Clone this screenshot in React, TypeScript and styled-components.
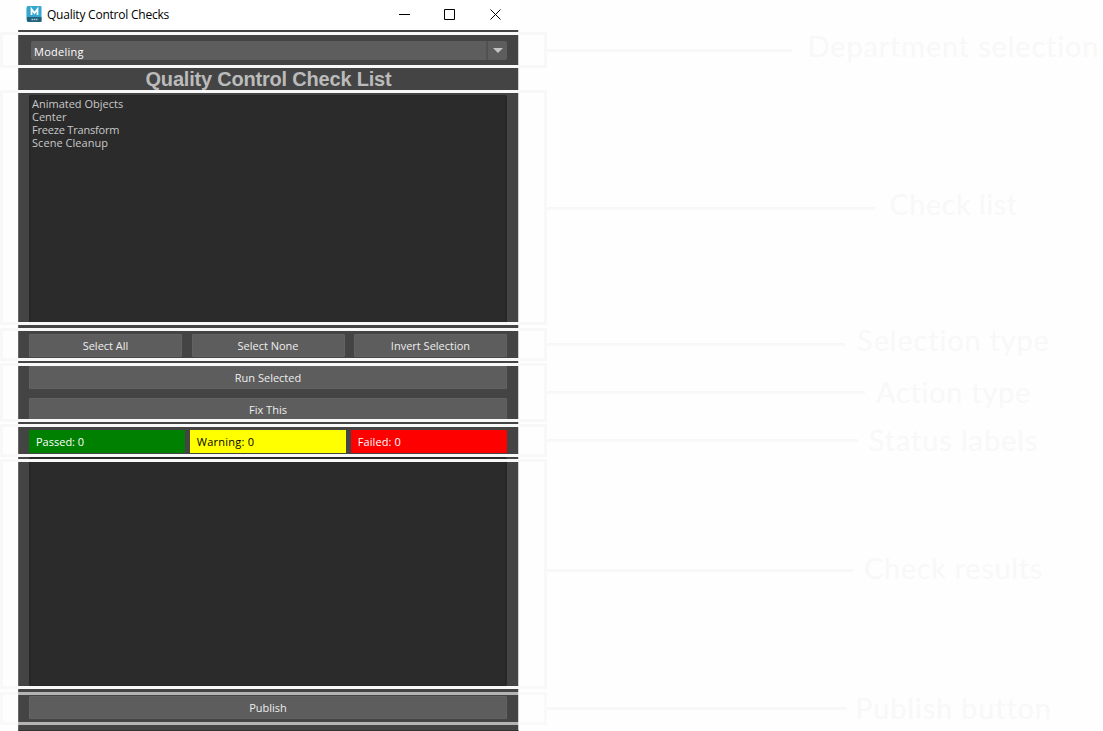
import React from "react";
import styled, { createGlobalStyle } from "styled-components";

const GlobalStyle = createGlobalStyle`
  * { box-sizing: border-box; }
  body { margin: 0; background: #fefefe; overflow: hidden; }
`;

const Page = styled.div`
  position: relative;
  width: 1103px;
  height: 731px;
  padding-left: 18px;
  overflow: hidden;
  background: #fefefe;
`;

const Window = styled.main`
  display: flex;
  flex-direction: column;
  width: 501px;
  height: 731px;
  font-family: "Open Sans", "Noto Sans", sans-serif;
  font-size: 11px;
  color: #eee;
`;

const TitleBar = styled.header`
  display: flex;
  align-items: center;
  flex: none;
  height: 30px;
  padding: 0 1px 2px 8px;
  background: #fff;
  color: #000;
`;

const WindowTitle = styled.span`
  flex: 1;
  margin-left: 5px;
  padding-top: 2px;
  font-size: 12px;
  line-height: 28px;
  letter-spacing: -0.22px;
`;

const WindowButton = styled.span`
  display: flex;
  justify-content: center;
  width: 45.5px;
`;

const Body = styled.div`
  display: flex;
  flex-direction: column;
  flex: 1;
  padding: 11px 11px 0 10px;
  background: #444;
  border: solid;
  border-width: 0 1px 1px;
  border-color: #333 #d0d0d0 #333 #666;
`;

const Select = styled.div`
  display: flex;
  flex: none;
  height: 19px;
  margin-left: 2px;
  border-radius: 2px;
  background: #5d5d5d;
  color: #fff;
`;

const SelectValue = styled.span`
  flex: 1;
  padding-left: 3px;
  line-height: 21px;
  letter-spacing: 0.25px;
`;

const SelectArrow = styled.span`
  display: flex;
  align-items: center;
  justify-content: center;
  width: 21px;
  border-left: 2px solid #515151;
`;

const Heading = styled.h1`
  flex: none;
  height: 24px;
  margin: 7px 0 4px;
  padding-left: 1px;
  text-align: center;
  font: bold 20px/24px "Liberation Sans", sans-serif;
  letter-spacing: -0.2px;
  color: #bbb;
`;

const ListBox = styled.div<{ $height: number; $top?: number }>`
  flex: none;
  height: ${(p) => p.$height}px;
  margin-top: ${(p) => p.$top ?? 0}px;
  padding: 1px 1px;
  border: 2px solid #272727;
  border-width: 1px 2px;
  border-radius: 2px;
  background: #2b2b2b;
`;

const ListItem = styled.div<{ $spacing: number }>`
  height: 13px;
  line-height: 14px;
  letter-spacing: ${(p) => p.$spacing}px;
  color: #c8c8c8;
`;

const ButtonRow = styled.div`
  display: grid;
  grid-template-columns: repeat(3, 1fr);
  gap: 9.5px;
  margin-top: 11px;
`;

const Button = styled.button<{ $top?: number }>`
  flex: none;
  height: 23px;
  margin: ${(p) => p.$top ?? 0}px 0 0;
  padding: 0;
  border: 1px solid #636363;
  border-radius: 1px;
  background: #5d5d5d;
  color: #eee;
  font: inherit;
  line-height: 21px;
`;

const StatusRow = styled.div`
  display: grid;
  grid-template-columns: repeat(3, 1fr);
  gap: 4.5px;
  margin-top: 9px;
`;

const Status = styled.span<{ $bg: string; $fg: string; $spacing?: number }>`
  height: 23px;
  padding-left: 7px;
  line-height: 24px;
  letter-spacing: ${(p) => p.$spacing ?? 0}px;
  background: ${(p) => p.$bg};
  color: ${(p) => p.$fg};
`;

const Frame = styled.div<{ $top: number; $height: number; $color: string }>`
  position: absolute;
  left: 0;
  top: ${(p) => p.$top}px;
  width: 547px;
  height: ${(p) => p.$height}px;
  border: 3px solid ${(p) => p.$color};
`;

const Connector = styled.div<{ $top: number; $end: number }>`
  position: absolute;
  left: 547px;
  top: ${(p) => p.$top}px;
  width: ${(p) => p.$end - 547}px;
  height: 3px;
  background: #f8f8f8;
`;

const Label = styled.div<{ $base: number; $spacing: number }>`
  position: absolute;
  left: 753px;
  top: ${(p) => p.$base - 31}px;
  width: 401px;
  text-align: center;
  white-space: nowrap;
  font: 29px/40px Lato, sans-serif;
  letter-spacing: ${(p) => p.$spacing}px;
  color: #f8f8f8;
`;

const LIGHT = "#f8f8f8";
const notes = [
  { text: "Department selection", top: 32, height: 36, line: 49, end: 792, base: 57, spacing: 0.8 },
  { text: "Check list", top: 90, height: 235, line: 207, end: 875, base: 215, spacing: 0.45 },
  { text: "Selection type", top: 328, height: 33, line: 343, end: 845, base: 351, spacing: 0.8 },
  { text: "Action type", top: 363, height: 59, line: 391, end: 865, base: 403, spacing: 0.7 },
  { text: "Status labels", top: 424, height: 33, line: 439, end: 858, base: 451, spacing: 0.85 },
  { text: "Check results", top: 459, height: 230, line: 569, end: 853, base: 579, spacing: 0.65 },
  { text: "Publish button", top: 692, height: 33, line: 707, end: 847, base: 719, spacing: 0.8, color: "rgba(245,245,245,0.63)" },
];

const checks = [
  { name: "Animated Objects", spacing: 0 },
  { name: "Center", spacing: 0 },
  { name: "Freeze Transform", spacing: -0.2 },
  { name: "Scene Cleanup", spacing: 0.05 },
];

function MayaIcon() {
  return (
    <svg width="16" height="17" viewBox="0 0 16 17">
      <path d="M0 1.5 2 0v15L0 14z" fill="#8cd0e2" />
      <rect x="1" width="14.5" height="16" rx="1" fill="#35a7cf" />
      <path d="M1 11h14.5v4a1 1 0 0 1-1 1H2l-1-1z" fill="#24627c" />
      <path d="M5.5 9V3l3 4 3-4v6" fill="none" stroke="#fff" strokeWidth="1.7" />
      <path d="M5.5 13.5h6" stroke="#a9c6d1" strokeWidth="1.6" strokeDasharray="1.6 .6" />
    </svg>
  );
}

export default function App() {
  return (
    <Page>
      <GlobalStyle />
      <Window>
        <TitleBar>
          <MayaIcon />
          <WindowTitle>Quality Control Checks</WindowTitle>
          <WindowButton>
            <svg width="11" height="11"><path d="M0 5.5h11" stroke="#000" /></svg>
          </WindowButton>
          <WindowButton>
            <svg width="11" height="11"><path d="M.5.5h10v10H.5z" fill="none" stroke="#000" /></svg>
          </WindowButton>
          <WindowButton>
            <svg width="11" height="11"><path d="m.5.5 10 10m0-10-10 10" stroke="#000" /></svg>
          </WindowButton>
        </TitleBar>
        <Body>
          <Select>
            <SelectValue>Modeling</SelectValue>
            <SelectArrow>
              <svg width="10" height="5"><path d="M0 0h10L5 5z" fill="#c4c4c4" /></svg>
            </SelectArrow>
          </Select>
          <Heading>Quality Control Check List</Heading>
          <ListBox $height={228}>
            {checks.map((c) => (
              <ListItem key={c.name} $spacing={c.spacing}>{c.name}</ListItem>
            ))}
          </ListBox>
          <ButtonRow>
            <Button>Select All</Button>
            <Button>Select None</Button>
            <Button>Invert Selection</Button>
          </ButtonRow>
          <Button $top={9}>Run Selected</Button>
          <Button $top={9}>Fix This</Button>
          <StatusRow>
            <Status $bg="#008000" $fg="#fff">Passed: 0</Status>
            <Status $bg="#ffff00" $fg="#000" $spacing={0.25}>Warning: 0</Status>
            <Status $bg="#ff0000" $fg="#fff" $spacing={0.1}>Failed: 0</Status>
          </StatusRow>
          <ListBox $height={229} $top={4} />
          <Button $top={10}>Publish</Button>
        </Body>
      </Window>
      {notes.map((n) => (
        <React.Fragment key={n.text}>
          <Frame $top={n.top} $height={n.height} $color={n.color ?? LIGHT} />
          <Connector $top={n.line} $end={n.end} />
          <Label $base={n.base} $spacing={n.spacing}>{n.text}</Label>
        </React.Fragment>
      ))}
    </Page>
  );
}
